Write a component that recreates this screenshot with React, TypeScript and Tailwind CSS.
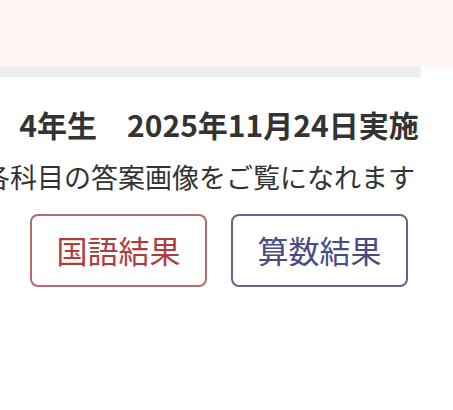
export default function App() {
  return (
    <div className="w-[453px] h-[410px] bg-white overflow-hidden" style={{ fontFamily: '"Noto Sans CJK JP", "Noto Sans", sans-serif' }}>
      <div className="h-[67px] bg-[#fff6f4]" />
      <div className="h-[10px] w-[421px] bg-[#ededee]" />

      <div className="w-[438px] flex flex-col items-center">
        <h1 className="mt-[25px] text-[30px] leading-[45px] font-bold text-[#333333] whitespace-nowrap">
          4年生　2025年11月24日実施
        </h1>
        <p className="mt-[10px] mr-[40px] text-[27px] leading-[40px] text-[#333333] whitespace-nowrap">
          各科目の答案画像をご覧になれます
        </p>
        <div className="mt-[17px] flex gap-6">
          <button className="w-[177px] h-[73px] rounded-lg border-2 border-[#b86a6a] text-[31px] text-[#b23c3c]">
            国語結果
          </button>
          <button className="w-[177px] h-[73px] rounded-lg border-2 border-[#64648e] text-[31px] text-[#4a4a86]">
            算数結果
          </button>
        </div>
      </div>
    </div>
  );
}
